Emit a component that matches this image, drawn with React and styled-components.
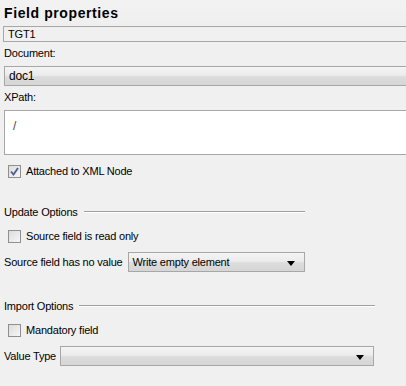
import React from "react";
import styled, { createGlobalStyle } from "styled-components";

const Global = createGlobalStyle`
  html, body {
    margin: 0;
    padding: 0;
    background: #f0f0f0;
    overflow: hidden;
  }
  body {
    font-family: "Liberation Sans", Arial, sans-serif;
    font-size: 11px;
    letter-spacing: -0.2px;
    color: #000;
  }
  * { box-sizing: border-box; }
`;

const Panel = styled.div`
  width: 406px;
  height: 386px;
  display: flex;
  flex-direction: column;
  background: #f0f0f0;
  overflow: hidden;
`;

const Title = styled.div`
  height: 25px;
  display: flex;
  align-items: center;
  padding-left: 4px;
  font-size: 14px;
  font-weight: bold;
  letter-spacing: 0.6px;
  background: linear-gradient(#f2f2f2, #efefef);
`;

const TextField = styled.div`
  height: 16px;
  margin: 1px -4px 0 3px;
  border: 1px solid #a7a7a7;
  display: flex;
  align-items: center;
  padding-left: 4px;
  background: #f0f0f0;
`;

const Label = styled.div`
  height: 22px;
  display: flex;
  align-items: center;
  padding-left: 4px;
`;

const Combo = styled.div`
  height: 20px;
  margin: 2px -4px 0 4px;
  border: 1px solid #a7a7a7;
  display: flex;
  align-items: center;
  padding-left: 4px;
  font-size: 12px;
  background: linear-gradient(#f4f4f4 0%, #ececec 45%, #dcdcdc 55%, #d6d6d6 100%);
`;

const Area = styled.div`
  height: 45px;
  margin: 2px -4px 0 4px;
  border: 1px solid #a7a7a7;
  background: #fff;
  padding: 8px 0 0 8px;
  font-size: 12px;
  color: #444;
`;

const CheckRow = styled.div`
  height: 26px;
  margin-top: ${(p) => p.$top || 0}px;
  display: flex;
  align-items: center;
  padding-left: 8px;
  gap: 5px;
`;

const Box = styled.span`
  width: 13px;
  height: 13px;
  border: 1px solid #8e8f8f;
  background: linear-gradient(135deg, #dcdcdc, #f6f6f6);
  display: flex;
  align-items: center;
  justify-content: center;
`;

const Section = styled.div`
  height: 22px;
  margin-top: ${(p) => p.$top}px;
  width: ${(p) => p.$width}px;
  display: flex;
  align-items: center;
  padding-left: 4px;
  gap: 6px;
`;

const Rule = styled.span`
  flex: 1;
  height: 2px;
  border-top: 1px solid #a0a0a0;
  border-bottom: 1px solid #ffffff;
`;

const SelectRow = styled.div`
  height: 26px;
  display: flex;
  align-items: center;
  padding-left: 4px;
  gap: ${(p) => p.$gap}px;
`;

const Select = styled.div`
  width: ${(p) => p.$width}px;
  height: 20px;
  border: 1px solid #a7a7a7;
  display: flex;
  align-items: center;
  justify-content: space-between;
  padding: 0 9px 0 4px;
  background: linear-gradient(#f4f4f4 0%, #ececec 45%, #dcdcdc 55%, #d6d6d6 100%);
`;

const Arrow = styled.span`
  width: 0;
  height: 0;
  border-left: 4px solid transparent;
  border-right: 4px solid transparent;
  border-top: 5px solid #000;
  margin-top: 2px;
`;

const Check = ({ checked }) => (
  <Box>
    {checked && (
      <svg width="9" height="9" viewBox="0 0 9 9">
        <path d="M1 4.5 L3.5 7.5 L8 1" fill="none" stroke="#4b5e94" strokeWidth="1.8" />
      </svg>
    )}
  </Box>
);

export default function App() {
  return (
    <>
      <Global />
      <Panel>
        <Title>Field properties</Title>
        <TextField>TGT1</TextField>
        <Label>Document:</Label>
        <Combo>doc1</Combo>
        <Label>XPath:</Label>
        <Area>/</Area>
        <CheckRow $top={3}>
          <Check checked />
          Attached to XML Node
        </CheckRow>

        <Section $top={17} $width={305}>
          Update Options
          <Rule />
        </Section>
        <CheckRow>
          <Check />
          Source field is read only
        </CheckRow>
        <SelectRow $gap={5}>
          Source field has no value
          <Select $width={177}>
            Write empty element
            <Arrow />
          </Select>
        </SelectRow>

        <Section $top={20} $width={375}>
          Import Options
          <Rule />
        </Section>
        <CheckRow>
          <Check />
          Mandatory field
        </CheckRow>
        <SelectRow $gap={4}>
          Value Type
          <Select $width={314}>
            <span />
            <Arrow />
          </Select>
        </SelectRow>
      </Panel>
    </>
  );
}
